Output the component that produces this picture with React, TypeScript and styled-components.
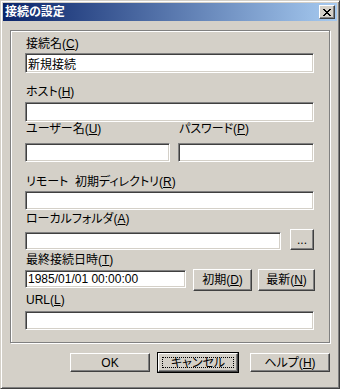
import React from 'react';
import styled, { createGlobalStyle } from 'styled-components';

const GlobalStyle = createGlobalStyle`
  html, body {
    margin: 0;
    padding: 0;
    background: #d4d0c8;
  }
  body {
    font-family: "Liberation Sans", "Noto Sans CJK JP", sans-serif;
    font-size: 12px;
    font-feature-settings: "palt";
  }
`;

// outer dialog frame, classic 3D border
const Window = styled.div`
  width: 340px;
  height: 389px;
  box-sizing: border-box;
  background: #d4d0c8;
  border: 1px solid;
  border-color: #d4d0c8 #404040 #404040 #d4d0c8;
  box-shadow: inset 1px 1px 0 #fff, inset -1px -1px 0 #808080;
  padding: 2px;
  display: flex;
  flex-direction: column;
`;

const TitleBar = styled.div`
  height: 18px;
  flex-shrink: 0;
  display: flex;
  align-items: center;
  justify-content: space-between;
  padding: 0 2px;
  background: linear-gradient(to right, #0a246a, #a6caf0);
`;

const Title = styled.span`
  color: #fff;
  font-weight: bold;
  font-size: 12px;
  line-height: 14px;
`;

const CloseButton = styled.button`
  box-sizing: border-box;
  width: 16px;
  height: 14px;
  padding: 0;
  margin: 0;
  background: #d4d0c8;
  border: 1px solid;
  border-color: #fff #404040 #404040 #fff;
  box-shadow: inset -1px -1px 0 #808080;
  display: flex;
  align-items: center;
  justify-content: center;
`;

const Body = styled.div`
  padding: 9px 7px 0 7px;
  display: flex;
  flex-direction: column;
`;

// etched frame without caption
const GroupBox = styled.div`
  box-sizing: border-box;
  width: 320px;
  border: 1px solid #808080;
  box-shadow: inset 1px 1px 0 #fff, 1px 1px 0 #fff;
  padding: 0 15px 12px 14px;
  display: flex;
  flex-direction: column;
`;

const Label = styled.div<{ $mt?: number }>`
  margin-top: ${p => p.$mt ?? 0}px;
  padding-left: 1px;
  height: 14px;
  line-height: 14px;
  font-size: 12px;
  color: #000;
  white-space: nowrap;

  u {
    text-decoration: underline;
    text-underline-offset: 1px;
  }
`;

const TextBox = styled.input<{ $mt?: number; $h?: number; $w?: number }>`
  box-sizing: border-box;
  display: block;
  margin: ${p => p.$mt ?? 0}px 0 0 0;
  width: ${p => (p.$w ? `${p.$w}px` : '100%')};
  height: ${p => p.$h ?? 19}px;
  padding: 0 2px;
  background: #fff;
  border: 1px solid;
  border-color: #808080 #fff #fff #808080;
  box-shadow: inset 1px 1px 0 #404040, inset -1px -1px 0 #d4d0c8;
  font-family: "Liberation Sans", "Noto Sans CJK JP", sans-serif;
  font-feature-settings: "palt";
  font-size: 12px;
  color: #000;
  outline: none;
  appearance: none;
  border-radius: 0;
`;

const Button = styled.button<{ $w: number; $h: number; $ml?: number; $default?: boolean }>`
  position: relative;
  box-sizing: border-box;
  flex-shrink: 0;
  width: ${p => p.$w}px;
  height: ${p => p.$h}px;
  margin: 0 0 0 ${p => p.$ml ?? 0}px;
  padding: 0;
  background: #d4d0c8;
  border: 1px solid;
  border-color: #fff #404040 #404040 #fff;
  box-shadow: inset -1px -1px 0 #808080;
  outline: ${p => (p.$default ? '1px solid #000' : 'none')};
  font-family: "Liberation Sans", "Noto Sans CJK JP", sans-serif;
  font-feature-settings: "palt";
  font-size: 12px;
  line-height: 14px;
  color: #000;
  border-radius: 0;

  u {
    text-underline-offset: 1px;
  }

  ${p =>
    p.$default &&
    `
    &::after {
      content: '';
      position: absolute;
      inset: 3px;
      border: 1px dotted #000;
    }
  `}
`;

const Row = styled.div<{ $mt?: number; $align?: string }>`
  display: flex;
  align-items: ${p => p.$align ?? 'flex-start'};
  margin-top: ${p => p.$mt ?? 0}px;
`;

const TwoCols = styled.div`
  display: grid;
  grid-template-columns: 145px 1fr;
  column-gap: 8px;
  row-gap: 7px;
`;

const ButtonBar = styled.div`
  display: flex;
  justify-content: flex-end;
  margin-top: 10px;
`;

const CloseGlyph = () => (
  <svg width="8" height="7" viewBox="0 0 8 7" shapeRendering="crispEdges">
    <path d="M0 0h2v1h-2zM6 0h2v1h-2zM1 1h2v1h-2zM5 1h2v1h-2zM2 2h4v1h-4zM3 3h2v1h-2zM2 4h4v1h-4zM1 5h2v1h-2zM5 5h2v1h-2zM0 6h2v1h-2zM6 6h2v1h-2z" fill="#000" />
  </svg>
);

const App = () => (
  <>
    <GlobalStyle />
    <Window>
      <TitleBar>
        <Title>接続の設定</Title>
        <CloseButton aria-label="閉じる">
          <CloseGlyph />
        </CloseButton>
      </TitleBar>
      <Body>
        <GroupBox>
          <Label $mt={6}>接続名(<u>C</u>)</Label>
          <TextBox $mt={2} $h={20} defaultValue="新規接続" />

          <Label $mt={12}>ホスト(<u>H</u>)</Label>
          <TextBox $mt={3} $h={20} />

          <TwoCols>
            <Label>ユーザー名(<u>U</u>)</Label>
            <Label>パスワード(<u>P</u>)</Label>
            <TextBox />
            <TextBox type="password" />
          </TwoCols>

          <Label $mt={13}>リモート&nbsp;&nbsp;初期ディレクトリ(<u>R</u>)</Label>
          <TextBox $mt={2} />

          <Label $mt={2}>ローカルフォルダ(<u>A</u>)</Label>
          <Row $mt={3} $align="flex-end">
            <TextBox $h={18} $w={257} />
            <Button $w={24} $h={21} $ml={9}>...</Button>
          </Row>

          <Label $mt={3}>最終接続日時(<u>T</u>)</Label>
          <Row $mt={2}>
            <TextBox $mt={1} $h={18} $w={161} defaultValue="1985/01/01 00:00:00" />
            <Button $w={59} $h={22} $ml={7}>初期(<u>D</u>)</Button>
            <Button $w={57} $h={22} $ml={6}>最新(<u>N</u>)</Button>
          </Row>

          <Label $mt={2}>URL(<u>L</u>)</Label>
          <TextBox $mt={4} />
        </GroupBox>

        <ButtonBar>
          <Button $w={80} $h={19}>OK</Button>
          <Button $w={80} $h={19} $ml={8} $default>キャンセル</Button>
          <Button $w={80} $h={19} $ml={12}>ヘルプ(<u>H</u>)</Button>
        </ButtonBar>
      </Body>
    </Window>
  </>
);

export default App;
